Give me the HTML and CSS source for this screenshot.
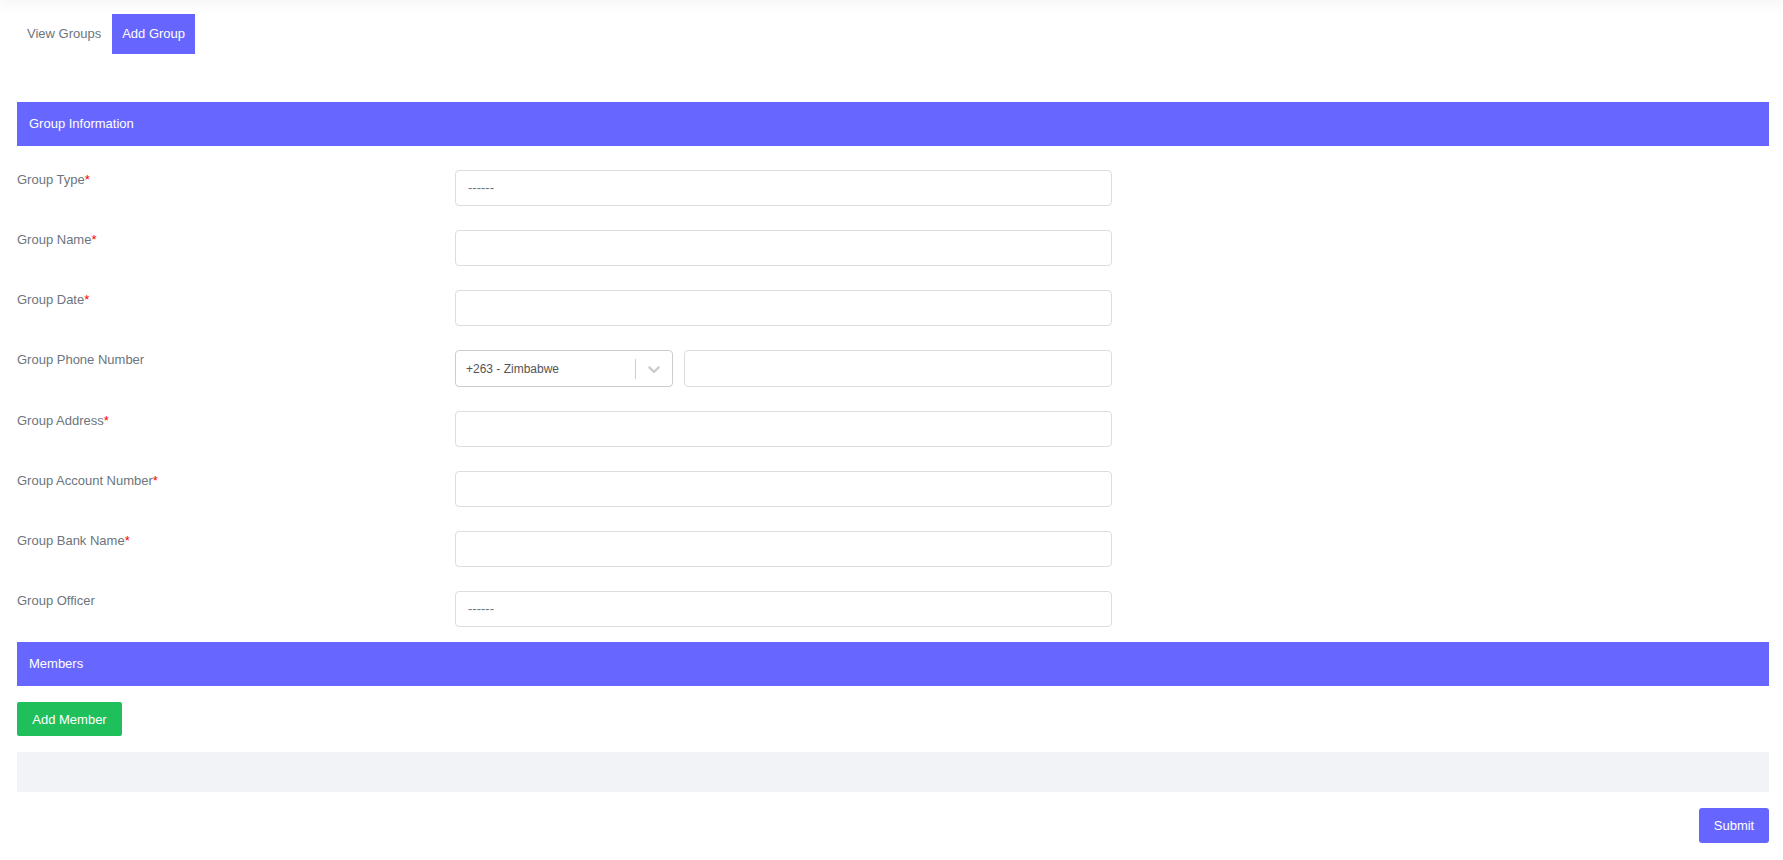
FILE: index.html
```html
<!DOCTYPE html>
<html lang="en">
<head>
<meta charset="utf-8">
<title>Add Group</title>
<link rel="stylesheet" href="styles.css">
</head>
<body>
<div class="topshadow"></div>
<div class="page">
  <nav class="tabs">
    <a class="tab">View Groups</a>
    <a class="tab active">Add Group</a>
  </nav>

  <div class="section-bar bar-info">Group Information</div>

  <form class="form">
    <div class="row">
      <label class="label">Group Type<span class="req">*</span></label>
      <div class="control"><div class="input select-box">------</div></div>
    </div>
    <div class="row">
      <label class="label">Group Name<span class="req">*</span></label>
      <div class="control"><div class="input"></div></div>
    </div>
    <div class="row">
      <label class="label">Group Date<span class="req">*</span></label>
      <div class="control"><div class="input"></div></div>
    </div>
    <div class="row">
      <label class="label">Group Phone Number</label>
      <div class="control phone">
        <div class="country">
          <span class="country-value">+263 - Zimbabwe</span>
          <span class="sep"></span>
          <span class="chev">
            <svg width="20" height="20" viewBox="0 0 20 20"><path fill="#cccccc" d="M4.516 7.548c0.436-0.446 1.043-0.481 1.576 0l3.908 3.747 3.908-3.747c0.533-0.481 1.141-0.446 1.574 0 0.436 0.445 0.408 1.197 0 1.615-0.406 0.418-4.695 4.502-4.695 4.502-0.217 0.223-0.502 0.335-0.787 0.335s-0.57-0.112-0.789-0.335c0 0-4.287-4.084-4.695-4.502s-0.436-1.170 0-1.615z"/></svg>
          </span>
        </div>
        <div class="input phone-input"></div>
      </div>
    </div>
    <div class="row">
      <label class="label">Group Address<span class="req">*</span></label>
      <div class="control"><div class="input"></div></div>
    </div>
    <div class="row">
      <label class="label">Group Account Number<span class="req">*</span></label>
      <div class="control"><div class="input"></div></div>
    </div>
    <div class="row">
      <label class="label">Group Bank Name<span class="req">*</span></label>
      <div class="control"><div class="input"></div></div>
    </div>
    <div class="row">
      <label class="label">Group Officer</label>
      <div class="control"><div class="input select-box">------</div></div>
    </div>
  </form>

  <div class="section-bar bar-members">Members</div>

  <div class="members">
    <button class="btn btn-green" type="button">Add Member</button>
    <div class="members-list"></div>
    <div class="actions">
      <button class="btn btn-primary" type="button">Submit</button>
    </div>
  </div>
</div>
</body>
</html>
```

FILE: styles.css
```css
* { box-sizing: border-box; }

html, body {
  margin: 0;
  padding: 0;
  background: #ffffff;
  font-family: "Liberation Sans", Arial, sans-serif;
  font-size: 13px;
  color: #6c757d;
}

.topshadow {
  height: 0;
  box-shadow: 0 0 12px 3px rgba(0, 0, 0, 0.07);
}

.page {
  padding: 0 14px 0 17px;
}

.tabs {
  display: flex;
  margin-top: 14px;
  height: 40px;
}

.tab {
  display: block;
  padding: 0 10px;
  line-height: 40px;
  color: #6c757d;
  text-decoration: none;
}

.tab:first-child { padding-right: 11px; }

.tab.active {
  background: #6666ff;
  color: #ffffff;
}

.section-bar {
  height: 44px;
  line-height: 44px;
  padding-left: 12px;
  background: #6767ff;
  color: #ffffff;
}

.bar-info { margin-top: 48px; }

.form {
  display: flex;
  flex-direction: column;
  gap: 24px;
  margin-top: 24px;
}

.row {
  display: grid;
  grid-template-columns: 25% 37.5%;
}

.label {
  line-height: 18px;
  padding-top: 1px;
  color: #6c757d;
}

.req { color: #ff0000; }

.input {
  height: 36px;
  border: 1px solid #dcdde3;
  border-radius: 4px;
  background: #ffffff;
}

.select-box {
  padding-left: 12px;
  line-height: 33px;
  font-size: 13px;
  color: #6c757d;
}

.phone {
  display: flex;
  gap: 11px;
}

.country {
  width: 218px;
  height: 37px;
  border: 1px solid #cccccc;
  border-radius: 4px;
  display: flex;
  align-items: center;
  padding-left: 10px;
}

.country-value {
  flex: 1;
  font-size: 12px;
  color: #555555;
}

.sep {
  width: 1px;
  height: 20px;
  background: #cccccc;
}

.chev {
  display: flex;
  padding: 8px;
}

.phone-input {
  flex: 1;
  height: 37px;
}

.bar-members { margin-top: 15px; }

.members {
  display: flex;
  flex-direction: column;
  align-items: flex-start;
  padding-top: 16px;
}

.btn {
  border: none;
  font-family: "Liberation Sans", Arial, sans-serif;
  font-size: 13px;
  color: #ffffff;
  cursor: pointer;
}

.btn-green {
  height: 34px;
  width: 105px;
  background: #1fbf5b;
  border-radius: 2px;
}

.members-list {
  align-self: stretch;
  height: 40px;
  margin-top: 16px;
  background: #f2f3f7;
}

.actions {
  align-self: stretch;
  display: flex;
  justify-content: flex-end;
  margin-top: 16px;
}

.btn-primary {
  height: 35px;
  width: 70px;
  background: #6666ff;
  border-radius: 3px;
}
```
